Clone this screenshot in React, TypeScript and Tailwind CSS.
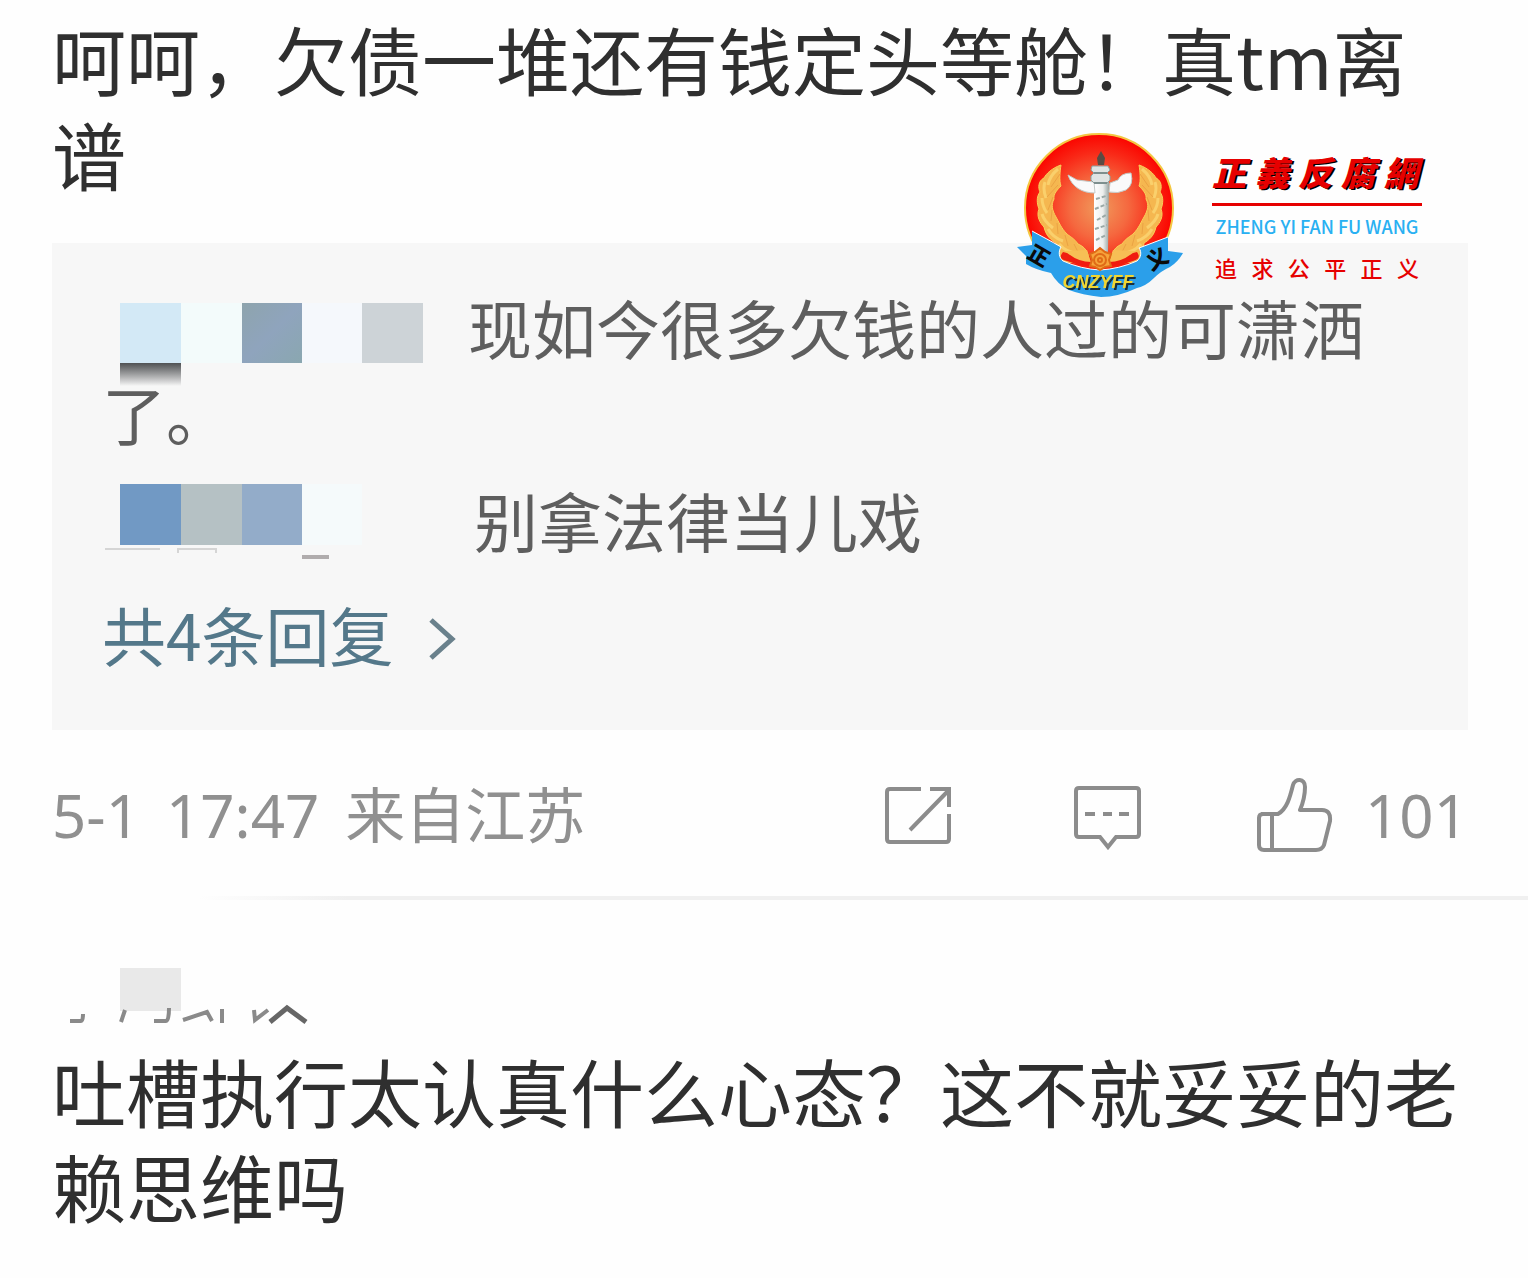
import React from "react";

interface CommentProps {
  children: React.ReactNode;
}

const CommentText: React.FC<CommentProps> = ({ children }) => (
  <p className="text-[74px] leading-[95px] text-[#2f2f2f]">{children}</p>
);

const ShareIcon = () => (
  <svg viewBox="0 0 70 70" className="h-[70px] w-[70px]" fill="none" stroke="#8c8c8c" strokeWidth="4" aria-hidden="true">
    <path d="M37 9H6Q3 9 3 12V59Q3 62 6 62H62Q65 62 65 59V34" />
    <path d="M46 9H65V27M64 11L26 50" />
  </svg>
);

const CommentIcon = () => (
  <svg viewBox="0 0 70 70" className="h-[70px] w-[70px]" fill="none" stroke="#8c8c8c" strokeWidth="4" aria-hidden="true">
    <path d="M6 8H63Q66 8 66 11V54Q66 57 63 57H43L35 67L27 57H6Q3 57 3 54V11Q3 8 6 8Z" />
    <path d="M12 34H22M30 34H39M46 34H56" />
  </svg>
);

const LikeIcon = () => (
  <svg viewBox="0 0 78 78" className="h-[78px] w-[78px]" fill="none" stroke="#8c8c8c" strokeWidth="4" strokeLinejoin="round" aria-hidden="true">
    <path d="M5 38H22C31 33 34 21 37 9C39 2 49 2 49 11C49 20 47 27 44 34H66Q75 34 74 45L68 69Q66 74 60 74H8Q3 74 3 69V42Q3 38 7 38M16 39V73" />
  </svg>
);

const Wreath = () => (
  <g>
    <path
      d="M46 35C37 38 31 44 29 48C23 51 23 58 25 62C21 67 22 74 24 79C21 86 25 93 29 97C31 106 36 110 41 113C42 122 45 130 52 132L72 134C75 127 73 118 63 114C59 108 54 106 52 104C46 98 44 92 41 87C37 80 36 75 39 69C38 64 43 59 46 56C44 51 45 41 46 35Z"
      fill="#f5b750"
      stroke="#fbcf5a"
      strokeWidth="1"
    />
    <path
      d="M43 39C37 44 34 48 33 55M30 52C28 58 29 63 31 68M27 68C27 74 29 79 32 83M27 84C29 91 34 95 38 98M33 99C37 106 42 109 48 111M44 114C50 121 56 123 63 123M50 128L68 129"
      fill="none"
      stroke="#fad06c"
      strokeWidth="3"
    />
    <path
      d="M45 44L36 57M43 55L32 67M38 67L33 80M37 80L36 91M42 93L43 104M50 105L53 116M59 114L64 124"
      fill="none"
      stroke="#eba343"
      strokeWidth="1"
    />
  </g>
);

const Emblem = () => (
  <svg viewBox="0 0 170 170" className="h-[170px] w-[170px] shrink-0" role="img" aria-label="CNZYFF">
    <defs>
      <radialGradient id="disc" cx="50%" cy="50%" r="50%">
        <stop offset="0" stopColor="#f09a5c" />
        <stop offset="0.4" stopColor="#f5683f" />
        <stop offset="0.75" stopColor="#f92a18" />
        <stop offset="1" stopColor="#fb0500" />
      </radialGradient>
      <linearGradient id="pillar">
        <stop offset="0" stopColor="#ffffff" />
        <stop offset="0.6" stopColor="#eceeed" />
        <stop offset="1" stopColor="#98a5a3" />
      </linearGradient>
    </defs>
    <circle cx="84" cy="78" r="74" fill="url(#disc)" stroke="#f4c742" strokeWidth="2" />
    <Wreath />
    <g transform="translate(170 0) scale(-1 1)">
      <Wreath />
    </g>
    {/* huabiao pillar */}
    <path d="M79 52H94L93 122H79Z" fill="url(#pillar)" />
    <path d="M53 45L62 50L79 52L80 63C67 63 57 57 53 45Z" fill="#fafafa" stroke="#c3cac8" strokeWidth="1" />
    <path d="M95 53L103 50Q106 43 116 43Q119 55 111 60Q103 64 94 62Z" fill="#fafafa" stroke="#c3cac8" strokeWidth="1" />
    <path d="M77 36H93L95 40L92 43L95 46V50L92 53H79L76 50V46L79 43L76 40Z" fill="#dfe4e3" stroke="#8f9f9e" strokeWidth="1" />
    <path d="M79 43H92M79 53H92" stroke="#7d8f8e" strokeWidth="2" />
    <path d="M83 35L82 28L86 21L90 28L89 35Z" fill="#5b4b43" />
    <path d="M81 69L91 66M80 79L92 74M82 90L91 85M80 99L92 95M81 110L91 105" stroke="#9aa9a7" strokeWidth="2" strokeDasharray="4 2" />
    <path
      d="M2 117L17 115V101C26 106 36 111 46 117C43 122 44 128 48 131Q66 139 85 140Q104 139 122 131C126 128 127 122 124 118L153 107V121L168 123Q163 132 155 137Q146 141 139 148Q131 156 122 158Q103 167 86 167Q67 165 54 160Q42 154 36 143Q21 140 11 134V126Z"
      fill="#2b9fea"
    />
    <path d="M17 101C26 106 36 111 46 117C43 122 44 128 48 131Q66 139 85 140Q104 139 122 131C126 128 127 122 124 118L153 107" fill="none" stroke="#ffffff" strokeWidth="1" />
    <path d="M48 122Q42 129 52 131Q68 137 85 137Q102 137 118 131Q127 129 122 122Q110 126 85 126Q60 126 48 122Z" fill="#f01c10" />
    <path d="M50 121Q62 132 76 132L72 120ZM120 121Q108 132 94 132L98 120Z" fill="#f7bf55" />
    <g fill="#f6a43b" stroke="#e06b16" strokeWidth="2">
      <path d="M85 118L90 122L96 124L94 130L96 136L90 137L85 140L80 137L75 136L77 130L75 124L80 122Z" />
      <circle cx="85" cy="130" r="6" />
      <circle cx="85" cy="130" r="2" />
    </g>
    <text transform="translate(11 127) rotate(30)" fontSize="21" fontWeight="900" fill="#0a0a0a">正</text>
    <text transform="translate(136 141) rotate(-28)" fontSize="22" fontWeight="900" fill="#0a0a0a">义</text>
    <text
      x="83"
      y="158"
      fontFamily="Liberation Sans, sans-serif"
      fontSize="18"
      fontWeight="700"
      fontStyle="italic"
      textAnchor="middle"
      fill="#f2d631"
      className="drop-shadow-[2px_2px_0_#183040]"
    >
      CNZYFF
    </text>
  </svg>
);

const Watermark = () => (
  <div className="absolute right-[106px] top-[130px] flex items-start gap-[27px]">
    <Emblem />
    <div className="flex w-[210px] flex-col pt-[24px]">
      <div className="flex h-[52px] justify-between border-b-[3px] border-[#e60000] pr-[4px] text-[34px] font-black italic leading-[36px] text-[#e60000] [text-shadow:2px_1px_0_#000]">
        <span>正</span>
        <span>義</span>
        <span>反</span>
        <span>腐</span>
        <span>網</span>
      </div>
      <div className="whitespace-nowrap pt-[6px] text-center text-[18px] font-medium leading-[28px] text-[#29b0f2]">ZHENG YI FAN FU WANG</div>
      <div className="flex justify-between px-[3px] pt-[13px] text-[22px] font-medium leading-[28px] text-[#e60000]">
        <span>追</span>
        <span>求</span>
        <span>公</span>
        <span>平</span>
        <span>正</span>
        <span>义</span>
      </div>
    </div>
  </div>
);

export default function App() {
  return (
    <main
      lang="zh-CN"
      className="relative min-h-screen overflow-hidden bg-[#fefefe] pl-[52px] pt-[10px] font-['Noto_Sans_CJK_SC',sans-serif]"
    >
      <article>
        <div className="pr-[60px]">
          <CommentText>呵呵，欠债一堆还有钱定头等舱！真tm离谱</CommentText>

          <section className="mt-[43px] bg-[#f7f7f7] px-[50px] pb-[54px] pt-[40px] text-[64px] leading-[86px] text-[#5e5e5e]">
            <p>
              {/* masked user name */}
              <span className="relative mt-[20px] inline-flex h-[60px] w-[366px] pl-[18px] align-top">
                <span className="w-[61px] bg-[#d3e9f6]" />
                <span className="w-[61px] bg-[#f3fbfb]" />
                <span className="w-[60px] bg-linear-to-br from-[#8ea4ad] via-[#8fa4bd] to-[#8aa7b0]" />
                <span className="w-[60px] bg-[#f5f8fc]" />
                <span className="w-[61px] bg-[#cdd3d7]" />
                <span className="absolute left-[18px] top-[60px] h-[23px] w-[61px] bg-linear-to-b from-[#505254] to-[#f7f7f7]" />
              </span>
              现如今很多欠钱的人过的可潇洒了。
            </p>
            <p className="mt-[21px]">
              <span className="relative mt-[8px] inline-flex h-[61px] w-[372px] pl-[18px] align-top">
                <span className="w-[61px] bg-[#7199c4]" />
                <span className="w-[61px] bg-[#b5c1c4]" />
                <span className="w-[60px] bg-[#93acc9]" />
                <span className="w-[60px] bg-[#f5fafb]" />
                <svg viewBox="0 0 230 16" className="absolute left-0 top-[60px] h-[16px] w-[230px]" fill="none" aria-hidden="true">
                  <path d="M3 5H58M76 9V5H114V9" stroke="#d5d5d5" strokeWidth="2" />
                  <path d="M200 13H227" stroke="#b0acad" strokeWidth="4" />
                </svg>
              </span>
              别拿法律当儿戏
            </p>
            <a href="#replies" className="mt-[28px] flex items-center gap-[34px] text-[#54788a]">
              <span>共4条回复</span>
              <svg viewBox="0 0 30 44" className="mt-[12px] h-[44px] w-[30px]" fill="none" stroke="#6a818c" strokeWidth="5" aria-hidden="true">
                <path d="M3 3L24 22L3 41" />
              </svg>
            </a>
          </section>

          <footer className="mt-[42px] flex h-[86px] items-center justify-between text-[60px] leading-[86px] text-[#909090]">
            <div className="flex gap-[26px] font-['Noto_Sans','Noto_Sans_CJK_SC',sans-serif]">
              <span>5-1</span>
              <span>17:47</span>
              <span>来自江苏</span>
            </div>
            <div className="flex items-center">
              <button type="button" aria-label="转发" className="mr-[119px]">
                <ShareIcon />
              </button>
              <button type="button" aria-label="评论" className="mr-[113px]">
                <CommentIcon />
              </button>
              <button type="button" aria-label="赞" className="flex items-center gap-[31px]">
                <LikeIcon />
                <span className="font-['Noto_Sans',sans-serif]">101</span>
              </button>
            </div>
          </footer>
        </div>
        <div className="mt-[38px] h-[4px] bg-linear-to-r from-transparent from-10% to-[#f0f0f0] to-20%" />
      </article>

      <article className="pr-[60px]">
        {/* masked user name, only the lower strokes show */}
        <svg viewBox="0 0 270 60" className="mt-[68px] block h-[60px] w-[270px]" fill="none" aria-hidden="true">
          <rect x="68" y="0" width="61" height="43" fill="#e9e9e9" />
          <path d="M18 53H29Q31 53 31 46M73 42L69 54M102 53H114Q117 53 117 40M131 52L155 44L160 53M170 41V55M202 42L203 52L216 42" stroke="#8a8a8a" strokeWidth="4" />
          <path d="M218 54L235 40L254 54" stroke="#666666" strokeWidth="5" />
        </svg>
        <div className="mt-[14px]">
          <CommentText>吐槽执行太认真什么心态？这不就妥妥的老赖思维吗</CommentText>
        </div>
      </article>

      <Watermark />
    </main>
  );
}
